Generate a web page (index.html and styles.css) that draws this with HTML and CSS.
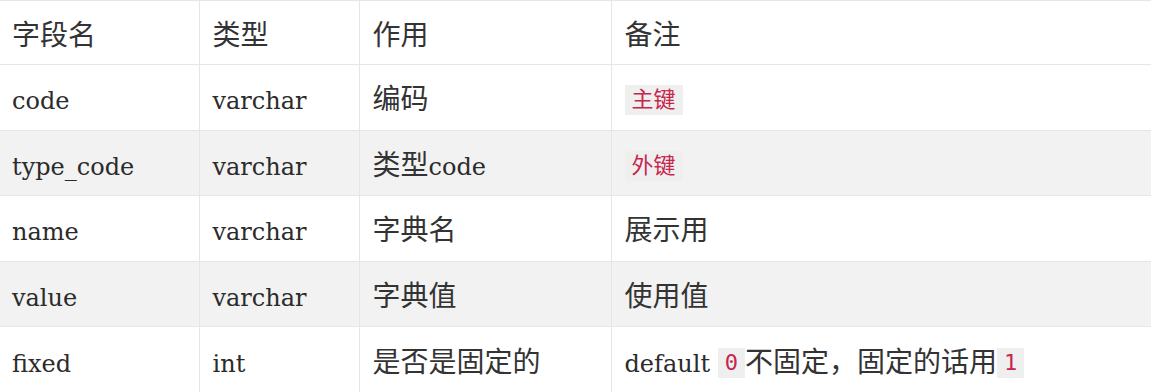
FILE: index.html
```html
<!DOCTYPE html>
<html lang="zh">
<head>
<meta charset="utf-8">
<title>字段表</title>
<link rel="stylesheet" href="styles.css">
</head>
<body>
<table class="fields">
  <colgroup>
    <col class="c1"><col class="c2"><col class="c3"><col class="c4">
  </colgroup>
  <thead>
    <tr><th>字段名</th><th>类型</th><th>作用</th><th>备注</th></tr>
  </thead>
  <tbody>
    <tr><td><span class="en">code</span></td><td><span class="en">varchar</span></td><td>编码</td><td><code class="tag">主键</code></td></tr>
    <tr><td><span class="en">type_code</span></td><td><span class="en">varchar</span></td><td>类型<span class="en">code</span></td><td><code class="tag">外键</code></td></tr>
    <tr><td><span class="en">name</span></td><td><span class="en">varchar</span></td><td>字典名</td><td>展示用</td></tr>
    <tr><td><span class="en">value</span></td><td><span class="en">varchar</span></td><td>字典值</td><td>使用值</td></tr>
    <tr><td><span class="en">fixed</span></td><td><span class="en">int</span></td><td>是否是固定的</td><td><span class="en">default </span><code class="tag">0</code>不固定，固定的话用<code class="tag">1</code></td></tr>
  </tbody>
</table>
</body>
</html>
```
FILE: styles.css
```css
html, body {
  margin: 0;
  padding: 0;
  background: #ffffff;
}

.fields {
  border-collapse: collapse;
  table-layout: fixed;
  width: 1160px;
  color: #333333;
  font-family: "Noto Sans CJK SC", "DejaVu Serif", serif;
  font-size: 28px;
}

.c1 { width: 199px; }
.c2 { width: 160px; }
.c3 { width: 252px; }
.c4 { width: 549px; }

.fields th,
.fields td {
  text-align: left;
  font-weight: normal;
  padding: 0 13px;
  border: 1px solid #e6e6e6;
  white-space: nowrap;
  vertical-align: middle;
}

.fields th:first-child,
.fields td:first-child {
  border-left: none;
  padding-left: 12px;
}

.fields th {
  height: 63px;
}

.fields td {
  height: 64.6px;
}

.fields tbody tr:nth-child(even) td {
  background: #f2f2f2;
}

.en {
  font-family: "DejaVu Serif", serif;
  font-size: 24px;
  color: #2b2b2b;
}

.tag {
  display: inline-block;
  vertical-align: middle;
  font-family: "DejaVu Sans Mono", "Noto Sans CJK SC", monospace;
  font-size: 22px;
  line-height: 30px;
  padding: 0 7px;
  margin-top: -3px;
  color: #c7254e;
  background: #efefef;
}
```
